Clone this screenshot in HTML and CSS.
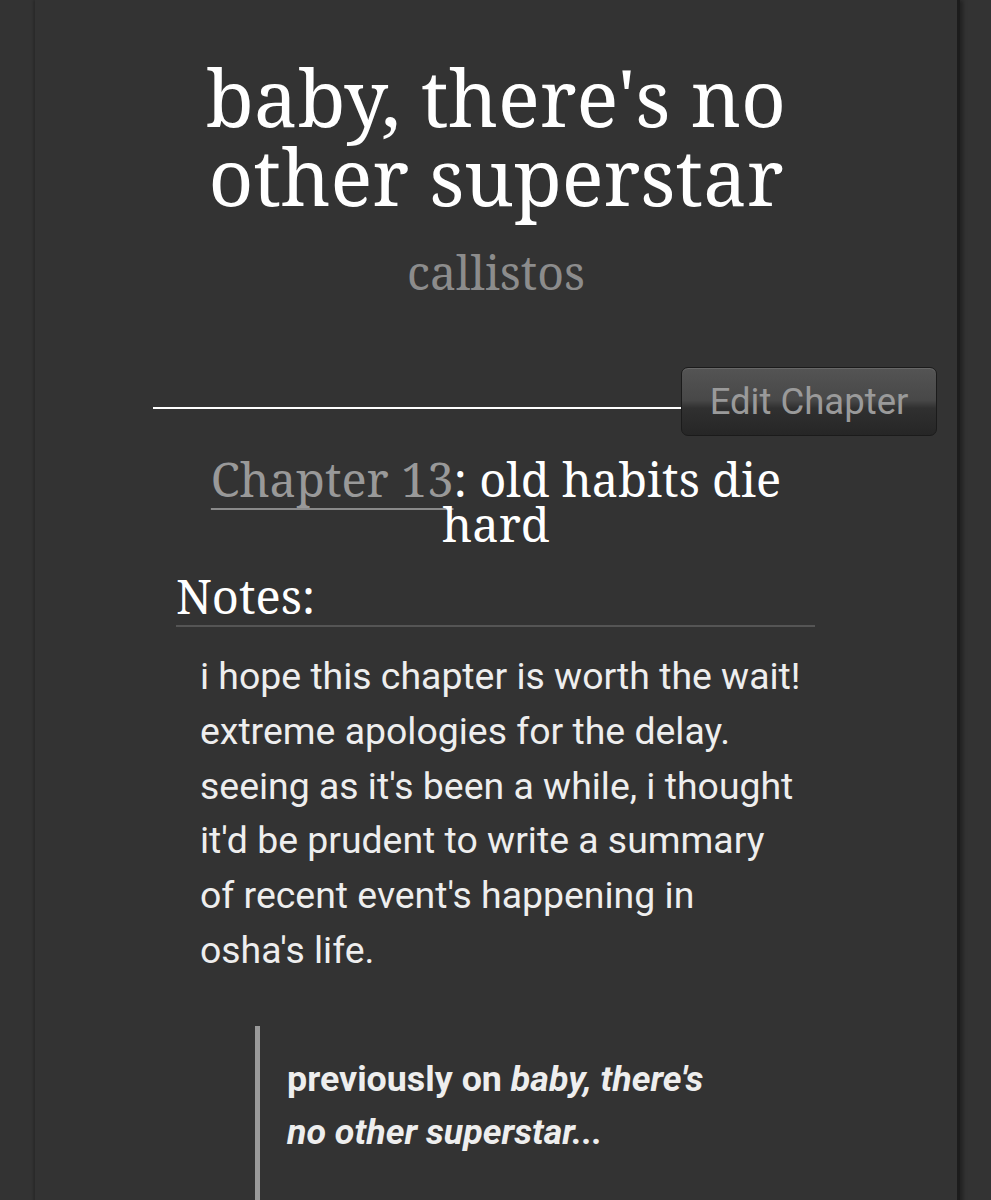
FILE: index.html
```html
<!DOCTYPE html>
<html lang="en">
<head>
<meta charset="utf-8">
<title>baby, there's no other superstar</title>
<link rel="stylesheet" href="styles.css">
</head>
<body>
<div class="page">
  <header class="work-head">
    <h1 class="work-title">baby, there's no other superstar</h1>
    <p class="byline">callistos</p>
  </header>

  <div class="chapter-bar">
    <span class="bar-rule"></span>
    <a class="btn" href="#">Edit Chapter</a>
  </div>

  <h2 class="chapter-title"><a class="chapter-link" href="#">Chapter 13</a>: old habits die hard</h2>

  <section class="notes">
    <h3 class="notes-heading">Notes:</h3>
    <div class="notes-body">
      <p>i hope this chapter is worth the wait!<br>extreme apologies for the delay.<br>seeing as it's been a while, i thought<br>it'd be prudent to write a summary<br>of recent event's happening in<br>osha's life.</p>
      <blockquote class="recap">
        <p><strong>previously on <em>baby, there's<br>no other superstar...</em></strong></p>
      </blockquote>
    </div>
  </section>
</div>
</body>
</html>
```

FILE: styles.css
```css
html, body {
  margin: 0;
  padding: 0;
  background: #333333;
  height: 100%;
  overflow: hidden;
}

body {
  font-family: "Noto Serif", "DejaVu Serif", serif;
  color: #ffffff;
}

.page {
  width: 922px;
  min-height: 1200px;
  margin: 0 0 0 35px;
  background: #333333;
  box-shadow: -2px 0 2px rgba(0, 0, 0, 0.18), 3px 0 0 #1c1c1c, 6px 0 4px rgba(0, 0, 0, 0.35);
  box-sizing: border-box;
  padding-top: 58px;
}

.work-head {
  text-align: center;
}

.work-title {
  margin: 0 auto;
  width: 620px;
  font-size: 78px;
  line-height: 79px;
  font-weight: normal;
  color: #ffffff;
}

.byline {
  margin: 26px 0 0;
  font-size: 46.5px;
  line-height: 60px;
  color: #8c8c8c;
}

.chapter-bar {
  display: flex;
  align-items: flex-end;
  margin: 65px 20px 0 118px;
}

.bar-rule {
  flex: 1;
  height: 2px;
  background: #ffffff;
  margin: 0 -2px 27px 0;
}

.btn {
  display: block;
  box-sizing: border-box;
  width: 256px;
  height: 69px;
  line-height: 67px;
  text-align: center;
  font-family: Roboto, "Noto Sans", sans-serif;
  font-size: 36.5px;
  color: #9a9a9a;
  text-decoration: none;
  border: 1px solid #1b1b1b;
  border-radius: 7px;
  background: linear-gradient(#545454 0%, #484848 48%, #303030 60%, #262626 100%);
  box-shadow: inset 0 1px 0 rgba(255, 255, 255, 0.12);
}

.chapter-title {
  margin: 21px auto 0;
  width: 620px;
  text-align: center;
  font-size: 47px;
  line-height: 45px;
  font-weight: normal;
  color: #ffffff;
}

.chapter-link {
  color: #999999;
  text-decoration: underline;
  text-decoration-color: #8a8a8a;
  text-decoration-thickness: 2px;
  text-underline-offset: 11px;
}

.notes {
  margin: 20px 0 0 141px;
  width: 639px;
}

.notes-heading {
  margin: 0;
  font-size: 47px;
  line-height: 58px;
  font-weight: normal;
  color: #ffffff;
  border-bottom: 2px solid #555555;
}

.notes-body {
  padding: 22px 0 0 24px;
  font-family: Roboto, "Noto Sans", sans-serif;
  font-size: 37.4px;
  line-height: 54.8px;
  color: #eeeeee;
}

.notes-body p {
  margin: 0;
}

.recap {
  margin: 48px 20px 0 55px;
  padding: 27px 0 0 27px;
  border-left: 5px solid #9a9a9a;
  min-height: 200px;
  font-size: 35.8px;
  line-height: 53px;
}

.recap strong {
  font-weight: 700;
}
```
